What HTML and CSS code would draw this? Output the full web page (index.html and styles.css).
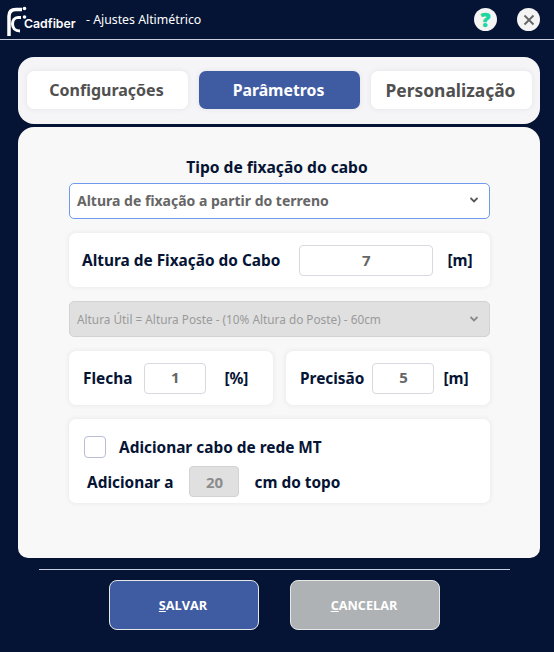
FILE: index.html
```html
<!DOCTYPE html>
<html lang="pt-BR">
<head>
    <meta charset="UTF-8">
    <meta name="viewport" content="width=device-width, initial-scale=1.0">
    <title>Ajustes Altimétrico</title>
    <link rel="stylesheet" href="styles.css">
</head>
<body>
    <header class="titlebar">
        <div class="logo">
            <svg class="logo-mark" width="24" height="34" viewBox="0 0 24 34">
                <path d="M15 6.500 H9 C4.500 6.500 2 9 2 13 V33" fill="none" stroke="#fff" stroke-width="3.500"/>
                <path d="M14 14.500 H11 C7.500 14.500 5.500 17.500 5.500 21 C5.500 25 8 28 13 28" fill="none" stroke="#fff" stroke-width="3"/>
                <circle cx="17.500" cy="5.500" r="1.800" fill="#fff"/>
                <circle cx="17.500" cy="14" r="1.800" fill="#fff"/>
            </svg>
            <span class="logo-text">Cadfiber</span>
        </div>
        <span class="window-title">- Ajustes Altimétrico</span>
        <div class="window-actions">
            <button class="round-btn help">?</button>
            <button class="round-btn close">
                <svg width="12" height="12" viewBox="0 0 12 12">
                    <path d="M1.500 1.500 L10.500 10.500 M10.500 1.500 L1.500 10.500" stroke="#666" stroke-width="1.800"/>
                </svg>
            </button>
        </div>
    </header>

    <nav class="tabs">
        <button class="tab tab-config">Configurações</button>
        <button class="tab active">Parâmetros</button>
        <button class="tab tab-person">Personalização</button>
    </nav>

    <main class="panel">
        <h3 class="section-title">Tipo de fixação do cabo</h3>
        <div class="select focused">
            <span>Altura de fixação a partir do terreno</span>
            <svg class="chevron" width="8" height="6" viewBox="0 0 8 6"><path d="M0.500 1 L4 4.500 L7.500 1" fill="none" stroke="#555" stroke-width="1.800"/></svg>
        </div>

        <div class="card card-height">
            <label class="label">Altura de Fixação do Cabo</label>
            <input class="num num-wide" type="text" value="7">
            <span class="label">[m]</span>
        </div>

        <div class="select disabled">
            <span>Altura Útil = Altura Poste - (10% Altura do Poste) - 60cm</span>
            <svg class="chevron" width="8" height="6" viewBox="0 0 8 6"><path d="M0.500 1 L4 4.500 L7.500 1" fill="none" stroke="#888" stroke-width="1.800"/></svg>
        </div>

        <div class="pair">
            <div class="card card-flecha">
                <label class="label">Flecha</label>
                <input class="num num-small" type="text" value="1">
                <span class="label">[%]</span>
            </div>
            <div class="card card-precisao">
                <label class="label">Precisão</label>
                <input class="num num-small" type="text" value="5">
                <span class="label">[m]</span>
            </div>
        </div>

        <div class="card card-mt">
            <div class="mt-row">
                <span class="checkbox"></span>
                <label class="label">Adicionar cabo de rede MT</label>
            </div>
            <div class="mt-row second">
                <label class="label">Adicionar a</label>
                <input class="num num-top" type="text" value="20" disabled>
                <span class="label">cm do topo</span>
            </div>
        </div>
    </main>

    <footer class="footer">
        <button class="action save"><u>S</u>ALVAR</button>
        <button class="action cancel"><u>C</u>ANCELAR</button>
    </footer>
</body>
</html>
```

FILE: styles.css
```css
*{
    box-sizing: border-box;
}
html, body{
    margin: 0;
    height: 652px;
}
body{
    background-color: #051434;
    font-family: "Noto Sans", sans-serif;
    overflow: hidden;
}
button{
    font-family: inherit;
}
.titlebar{
    height: 40px;
    border-bottom: 1px solid #c9cfdf;
    display: flex;
    align-items: center;
    padding: 0 14px 0 7px;
    color: white;
}
.logo{
    display: flex;
    align-items: flex-end;
    width: 79px;
    height: 34px;
}
.logo-mark{
    flex-shrink: 0;
}
.logo-text{
    font-family: "Inter", sans-serif;
    font-size: 12.300px;
    font-weight: 600;
    margin: 0 0 6px -7px;
}
.window-title{
    font-size: 12.300px;
}
.window-actions{
    margin-left: auto;
    display: flex;
    gap: 20px;
}
.round-btn{
    width: 23px;
    height: 23px;
    border-radius: 50%;
    border: none;
    padding: 0;
    background-color: #f4f4f4;
    display: flex;
    align-items: center;
    justify-content: center;
}
.help{
    color: #1fd6a0;
    font-size: 19px;
    font-weight: 900;
    -webkit-text-stroke: 0.6px #1fd6a0;
}
.tabs{
    margin: 17px 14px 0 18px;
    height: 67px;
    background-color: #f5f5f7;
    border-radius: 16px;
    display: flex;
    gap: 11px;
    padding: 14px 8px 0 9px;
}
.tab{
    width: 161px;
    height: 38px;
    border: none;
    border-radius: 7px;
    background-color: white;
    color: #505050;
    font-weight: 700;
    box-shadow: 0 0 5px #e2e2e8;
    padding: 0 2px 0 0;
}
.tab-config{
    font-size: 16px;
}
.tab-person{
    font-size: 17.400px;
}
.tab.active{
    background-color: #3f5ca3;
    color: white;
    font-size: 15.800px;
}
.panel{
    margin: 3px 14px 0 18px;
    height: 431px;
    background-color: #f8f8f8;
    border-radius: 16px 16px 10px 10px;
    padding: 30px 50px 0 51px;
}
.section-title{
    margin: 0 5px 5px 0;
    height: 21px;
    line-height: 21px;
    text-align: center;
    font-size: 15.600px;
    font-weight: 700;
    color: #051434;
}
.select{
    height: 36px;
    border-radius: 5px;
    display: flex;
    align-items: center;
    justify-content: space-between;
    padding: 0 11px 0 7px;
}
.select.focused{
    background-color: white;
    border: 1px solid #6f9af0;
    color: #666;
    font-size: 14px;
    font-weight: 700;
    padding-bottom: 2px;
}
.select.disabled{
    background-color: #e0e0e0;
    border: 1px solid #d2d2d2;
    color: #9a9a9a;
    font-size: 11.800px;
    margin-top: 14px;
}
.card{
    background-color: white;
    border-radius: 7px;
    box-shadow: 0 0 5px #e4e4ea;
}
.label{
    font-size: 15.400px;
    font-weight: 700;
    color: #051434;
}
.num{
    height: 31px;
    border: 1px solid #d8d8de;
    border-radius: 4px;
    background-color: white;
    text-align: center;
    color: #666;
    font-family: inherit;
    font-size: 15px;
    font-weight: 700;
    padding: 0;
}
.card-height{
    margin-top: 14px;
    height: 54px;
    display: flex;
    align-items: center;
    padding: 0 13px;
}
.num-wide{
    width: 134px;
    margin: 0 14px 0 19px;
}
.pair{
    margin-top: 14px;
    display: flex;
    gap: 13px;
}
.pair .card{
    height: 54px;
    flex: 1;
    display: flex;
    align-items: center;
    padding-left: 14px;
}
.num-small{
    width: 62px;
    margin: 0 18px 0 12px;
    padding-bottom: 2px;
}
.card-precisao .num-small{
    margin: 0 9px 0 8px;
}
.card-mt{
    margin-top: 14px;
    height: 84px;
    padding: 17px 14px 0 15px;
}
.mt-row{
    display: flex;
    align-items: center;
}
.checkbox{
    width: 22px;
    height: 22px;
    border: 1px solid #b9bdd8;
    border-radius: 4px;
    margin-right: 13px;
}
.mt-row.second{
    margin-top: 8px;
    padding-left: 3px;
}
.mt-row.second .label{
    padding-top: 2px;
}
.num-top{
    width: 50px;
    margin: 0 15px 0 16px;
    background-color: #e0e0e0;
    border-color: #d2d2d2;
    color: #8c8c8c;
}
.footer{
    margin: 11px 44px 0 39px;
    border-top: 1px solid #c9cfdf;
    padding: 10px 0 0 70px;
    display: flex;
    gap: 31px;
}
.action{
    width: 150px;
    height: 50px;
    border: 1px solid #e8e8e8;
    border-radius: 8px;
    color: white;
    font-family: "Open Sans", sans-serif;
    font-size: 12.700px;
    font-weight: 700;
    padding: 0 2px 0 0;
}
.save{
    background-color: #3f5ca3;
}
.cancel{
    background-color: #aeb2b5;
}
```
